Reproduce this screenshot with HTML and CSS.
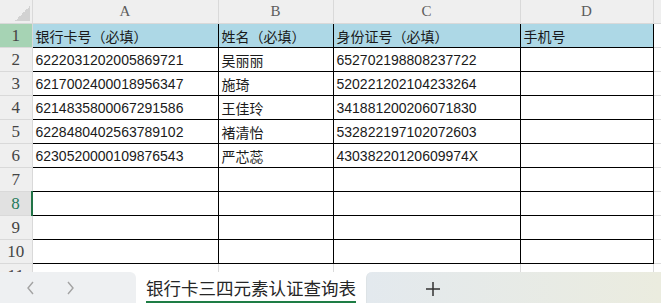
FILE: index.html
```html
<!DOCTYPE html>
<html lang="zh-CN">

<head>
    <meta charset="UTF-8">
    <title>银行卡三四元素认证查询表</title>
    <link rel="stylesheet" href="styles.css">
</head>

<body>
    <div class="sheet">
        <div class="grid-area">
            <table class="grid">
                <colgroup>
                    <col class="c-row">
                    <col class="c-a">
                    <col class="c-b">
                    <col class="c-c">
                    <col class="c-d">
                    <col class="c-e">
                </colgroup>
                <thead>
                    <tr>
                        <th class="corner"></th>
                        <th class="col-head">A</th>
                        <th class="col-head">B</th>
                        <th class="col-head">C</th>
                        <th class="col-head">D</th>
                        <th class="col-head"></th>
                    </tr>
                </thead>
                <tbody>
                    <tr class="title-row">
                        <th class="row-head">1</th>
                        <td>银行卡号（必填）</td>
                        <td>姓名（必填）</td>
                        <td>身份证号（必填）</td>
                        <td>手机号</td>
                        <td class="outside"></td>
                    </tr>
                    <tr>
                        <th class="row-head">2</th>
                        <td>6222031202005869721</td>
                        <td>吴丽丽</td>
                        <td>652702198808237722</td>
                        <td></td>
                        <td class="outside"></td>
                    </tr>
                    <tr>
                        <th class="row-head">3</th>
                        <td>6217002400018956347</td>
                        <td>施琦</td>
                        <td>520221202104233264</td>
                        <td></td>
                        <td class="outside"></td>
                    </tr>
                    <tr>
                        <th class="row-head">4</th>
                        <td>6214835800067291586</td>
                        <td>王佳玲</td>
                        <td>341881200206071830</td>
                        <td></td>
                        <td class="outside"></td>
                    </tr>
                    <tr>
                        <th class="row-head">5</th>
                        <td>6228480402563789102</td>
                        <td>褚清怡</td>
                        <td>532822197102072603</td>
                        <td></td>
                        <td class="outside"></td>
                    </tr>
                    <tr>
                        <th class="row-head">6</th>
                        <td>6230520000109876543</td>
                        <td>严芯蕊</td>
                        <td>43038220120609974X</td>
                        <td></td>
                        <td class="outside"></td>
                    </tr>
                    <tr>
                        <th class="row-head">7</th>
                        <td></td>
                        <td></td>
                        <td></td>
                        <td></td>
                        <td class="outside"></td>
                    </tr>
                    <tr class="active-row">
                        <th class="row-head">8</th>
                        <td class="active-cell"></td>
                        <td></td>
                        <td></td>
                        <td></td>
                        <td class="outside"></td>
                    </tr>
                    <tr>
                        <th class="row-head">9</th>
                        <td></td>
                        <td></td>
                        <td></td>
                        <td></td>
                        <td class="outside"></td>
                    </tr>
                    <tr>
                        <th class="row-head">10</th>
                        <td></td>
                        <td></td>
                        <td></td>
                        <td></td>
                        <td class="outside"></td>
                    </tr>
                    <tr class="last-row">
                        <th class="row-head">11</th>
                        <td></td>
                        <td></td>
                        <td></td>
                        <td></td>
                        <td class="outside"></td>
                    </tr>
                </tbody>
            </table>
        </div>

        <div class="tab-bar">
            <div class="tab-nav">
                <svg width="10" height="14" viewBox="0 0 10 14">
                    <polyline points="7,1 2,7 7,13" fill="none" stroke="#a3a3a3" stroke-width="1.4" />
                </svg>
                <svg width="10" height="14" viewBox="0 0 10 14">
                    <polyline points="3,1 8,7 3,13" fill="none" stroke="#a3a3a3" stroke-width="1.4" />
                </svg>
            </div>
            <div class="tab active">银行卡三四元素认证查询表</div>
            <div class="tab-add">
                <svg width="14" height="14" viewBox="0 0 14 14">
                    <path d="M7 0v14M0 7h14" stroke="#333" stroke-width="1.5" fill="none" />
                </svg>
            </div>
        </div>
    </div>
</body>

</html>
```

FILE: styles.css
```css
html,
body {
    margin: 0;
    padding: 0;
    background-color: #ffffff;
}

body {
    font-family: "Liberation Sans", "Noto Sans CJK SC", sans-serif;
    color: #1a1a1a;
}

.sheet {
    width: 661px;
    height: 303px;
    display: flex;
    flex-direction: column;
    overflow: hidden;
}

.grid-area {
    height: 272px;
    overflow: hidden;
}

/* Spreadsheet grid */
.grid {
    border-collapse: collapse;
    table-layout: fixed;
    width: 673px;
}

.c-row { width: 32px; }
.c-a { width: 186px; }
.c-b { width: 115px; }
.c-c { width: 187px; }
.c-d { width: 133px; }
.c-e { width: 20px; }

.grid th,
.grid td {
    padding: 0;
    height: 23px;
    overflow: hidden;
    white-space: nowrap;
}

.grid td {
    border: 1px solid #000;
    font-size: 14px;
    padding-left: 3px;
    text-align: left;
}

.grid td.outside {
    border-top: 1px solid #dadada;
    border-bottom: 1px solid #dadada;
    border-right: 1px solid #dadada;
}

.col-head {
    height: 21px !important;
    background-color: #efefef;
    border: 1px solid #d9d9d9;
    border-top: none;
    font-family: "Liberation Serif", serif;
    font-weight: normal;
    font-size: 15px;
    color: #5c5c5c;
}

.corner {
    border-right: 1px solid #d9d9d9;
    border-bottom: 1px solid #d9d9d9;
    background: linear-gradient(to top left, #d2d2d2 50%, transparent 50%) right 2px bottom 2px / 15px 15px no-repeat, #efefef;
}

.row-head {
    background-color: #efefef;
    border: 1px solid #d9d9d9;
    border-left: none;
    font-family: "Liberation Serif", serif;
    font-weight: normal;
    font-size: 17px;
    color: #444;
    text-align: center;
}

.title-row td {
    background-color: #add8e6;
}

.title-row td.outside {
    background-color: #ffffff;
}

.title-row .row-head {
    background-color: #a6d3b4;
}

.active-row .row-head {
    background-color: #e1e1e1;
    color: #1f7a5a;
}

.active-cell {
    border-left: 2px solid #217346 !important;
}

.last-row td {
    border-bottom: none;
    border-left: 1px solid #dadada;
    border-right: 1px solid #dadada;
}

.grid tbody tr.last-row td:first-of-type {
    border-top: 1px solid #000;
}

/* Sheet tabs */
.tab-bar {
    height: 31px;
    display: flex;
    align-items: stretch;
}

.tab-nav {
    width: 136px;
    background-color: #eef0f2;
    border-top-right-radius: 6px;
    display: flex;
    align-items: center;
    gap: 29px;
    padding-left: 26px;
    box-sizing: border-box;
}

.tab {
    width: 226px;
    margin-left: 4px;
    font-size: 17.5px;
    color: #262626;
    display: flex;
    align-items: center;
    justify-content: center;
    box-sizing: border-box;
}

.tab.active {
    border-bottom: 2px solid #1e7d45;
    margin-left: 10px;
    width: 210px;
    padding-top: 2px;
}

.tab-add {
    flex: 1;
    margin-left: 10px;
    border-top-left-radius: 6px;
    border-left: 1px solid #dde3e6;
    background: linear-gradient(to right, #e3e9ee, #ebecdf);
    display: flex;
    align-items: center;
    padding-left: 59px;
    padding-top: 2px;
}
```
